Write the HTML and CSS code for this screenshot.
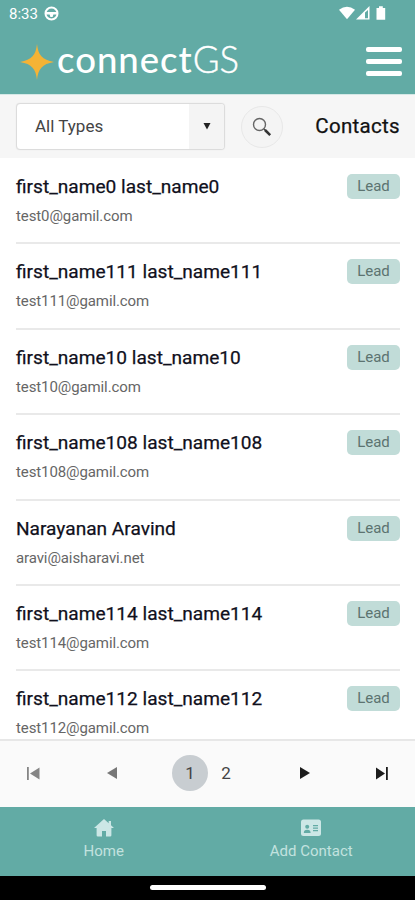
FILE: index.html
```html
<!DOCTYPE html>
<html lang="en">
<head>
<meta charset="utf-8">
<title>connectGS Contacts</title>
<link rel="stylesheet" href="styles.css">
</head>
<body>
<div class="app">
  <div class="status">
    <span class="clock">8:33</span>
    <svg class="status-app" width="15" height="15" viewBox="0 0 15 15"><circle cx="7.5" cy="7.5" r="6" fill="none" stroke="#fff" stroke-width="2"/><path d="M2 6h11v2.5H9.4l-.8 2.5H6.4l-.8-2.5H2z" fill="#fff"/></svg>
    <svg class="signals" width="48" height="15" viewBox="0 0 48 15"><path d="M0 3.7Q8 -2.2 16 3.7L8 13.3z" fill="#fff"/><path d="M17 13.5 30.5 0v13.5z" fill="#fff"/><path d="M26 6.5v5.7h3V4z" fill="#62aba5"/><path d="M37.5 2h2.5V.3h3.8V2h2.4v11.7h-8.7z" fill="#fff"/></svg>
  </div>
  <header class="header">
    <div class="brand">
      <svg width="34" height="36" viewBox="0 0 34 36"><path d="M17 0C18.2 11 22 15.9 34 18 22 20 18.2 25 17 36 15.8 25 12 20 0 18 12 15.9 15.8 11 17 0z" fill="#f5b335"/></svg>
      <span class="logo">connect</span><span class="logo logo-thin">GS</span>
    </div>
    <div class="menu"><i></i><i></i><i></i></div>
  </header>
  <div class="toolbar">
    <div class="select"><span>All Types</span><b><svg width="8" height="7" viewBox="0 0 8 7"><path d="M.5 0h7L4 6.5z" fill="#222"/></svg></b></div>
    <div class="search"><svg width="20" height="20" viewBox="0 0 20 20" fill="none"><circle cx="7.5" cy="7.5" r="6" stroke="#666" stroke-width="1.4"/><path d="m12 12 1.8 1.8" stroke="#444" stroke-width="1.4"/><path d="m13 13 5.2 5.2" stroke="#333" stroke-width="2.5"/></svg></div>
    <h1>Contacts</h1>
  </div>
  <main class="list">
    <article class="row"><div><h2>first_name0 last_name0</h2><p>test0@gamil.com</p></div><span class="tag">Lead</span></article>
    <article class="row"><div><h2>first_name111 last_name111</h2><p>test111@gamil.com</p></div><span class="tag">Lead</span></article>
    <article class="row"><div><h2>first_name10 last_name10</h2><p>test10@gamil.com</p></div><span class="tag">Lead</span></article>
    <article class="row"><div><h2>first_name108 last_name108</h2><p>test108@gamil.com</p></div><span class="tag">Lead</span></article>
    <article class="row"><div><h2>Narayanan Aravind</h2><p>aravi@aisharavi.net</p></div><span class="tag">Lead</span></article>
    <article class="row"><div><h2>first_name114 last_name114</h2><p>test114@gamil.com</p></div><span class="tag">Lead</span></article>
    <article class="row"><div><h2>first_name112 last_name112</h2><p>test112@gamil.com</p></div><span class="tag">Lead</span></article>
  </main>
  <nav class="pager">
    <svg width="13" height="13" viewBox="0 0 13 13" fill="#858585"><path d="M0 0h1.8v13H0zM12.5.5v12L3 6.5z"/></svg>
    <svg width="10" height="12" viewBox="0 0 10 12" fill="#777"><path d="M10 0v12L0 6z"/></svg>
    <div class="pages"><span class="current">1</span><span>2</span></div>
    <svg width="10" height="12" viewBox="0 0 10 12" fill="#1c1c1c"><path d="M0 0v12l10-6z"/></svg>
    <svg width="12" height="13" viewBox="0 0 12 13" fill="#1c1c1c"><path d="M0 .5v12l9-6zM10 0h1.8v13H10z"/></svg>
  </nav>
  <footer class="tabs">
    <div class="tab"><svg width="20" height="18" viewBox="0 0 20 18"><path d="M10 0 0 9h2.6v7.2q0 1.3 1.3 1.3H8V12h4v5.5h4.1q1.3 0 1.3-1.3V9H20l-3-2.8V2h-2.3v2.2z" fill="#cce7e6"/></svg><span>Home</span></div>
    <div class="tab"><svg width="20" height="18" viewBox="0 0 20 18"><rect y=".5" width="20" height="16.5" rx="2.5" fill="#cce7e6"/><g fill="#62aba5"><circle cx="6.2" cy="7.7" r="2"/><path d="M2.8 14q0-3.2 3.4-3.2T9.6 14zM12 6h5v1.2h-5zM12 8.5h5v1.2h-5zM12 11h5v1.2h-5z"/></g></svg><span>Add Contact</span></div>
  </footer>
  <div class="gesture"><i></i></div>
</div>
</body>
</html>
```
FILE: styles.css
```css
* { box-sizing: border-box; }
body { margin: 0; font-family: Roboto, sans-serif; background: #fff; }
h1, h2, p { margin: 0; font-weight: 400; white-space: nowrap; }
svg { display: block; flex: none; }
.app { width: 415px; height: 900px; display: flex; flex-direction: column; overflow: hidden; }
.status { height: 28px; background: #62aba5; display: flex; align-items: center; padding: 0 28px 1px 9px; color: #fff; flex: none; }
.clock { font-size: 15px; width: 35px; }
.signals { margin-left: auto; }
.header { height: 66px; flex: none; background: #62aba5; display: flex; align-items: center; justify-content: space-between; padding: 0 13px 0 20px; }
.brand { display: flex; align-items: center; }
.brand svg { margin-top: 1px; }
.logo { font: 500 36.5px/44px Lato, sans-serif; color: #fff; margin: -4px 0 0 3px; letter-spacing: 1px; }
.logo-thin { font-weight: 300; margin-left: 0; letter-spacing: 0; -webkit-text-stroke: .4px #fff; }
.menu { width: 36px; display: grid; gap: 7px; margin-top: 1px; }
.menu i { height: 5px; border-radius: 2px; background: #fff; }
.toolbar { height: 64px; flex: none; background: #f6f6f6; border-top: 1px solid #d5e8e6; display: flex; align-items: center; padding: 0 15px 0 16px; }
.select { width: 209px; height: 47px; border: 1px solid #dcdcdc; border-radius: 4px; display: flex; background: #fff; overflow: hidden; box-shadow: 0 0 1px #ddd; }
.select span { flex: 1; padding-left: 18px; font-size: 17px; line-height: 45px; color: #444; }
.select b { width: 35px; display: grid; place-items: center; background: #f4f4f4; }
.search { width: 42px; height: 42px; margin-left: 16px; border: 1px solid #e8e8e8; border-radius: 50%; background: #f4f4f4; display: grid; place-items: center; }
.toolbar h1 { margin: -2px 0 0 auto; font-size: 20.5px; color: #111; letter-spacing: .3px; -webkit-text-stroke: .25px #111; }
.list { height: 581px; flex: none; overflow: hidden; padding: 1px 15px 0 16px; }
.row { height: 85.4px; display: flex; justify-content: space-between; padding-top: 15px; border-bottom: 2px solid #e9e9e9; }
.row h2 { font-size: 19.1px; line-height: 26px; color: #10101c; -webkit-text-stroke: .25px #10101c; }
.row p { font-size: 15px; line-height: 20px; margin-top: 6px; color: #666; letter-spacing: -.1px; }
.tag { width: 53px; height: 25px; border-radius: 5px; background: #c1dcd8; color: #5c7370; font-size: 15px; line-height: 25px; text-align: center; }
.pager { height: 68px; flex: none; border-top: 2px solid #e7e7e7; background: #fafafa; display: grid; grid-template-columns: 80px 65px 128px 76px 12px; align-items: center; padding: 0 25px 2px 27px; }
.pages { display: flex; align-items: center; font-size: 17px; color: #444; }
.pages span { width: 36px; line-height: 36px; text-align: center; }
.pages .current { background: #c8cdd1; border-radius: 50%; }
.tabs { height: 69px; flex: none; background: #62aba5; display: grid; grid-template-columns: 1fr 1fr; color: #c2e2df; }
.tab { display: flex; flex-direction: column; align-items: center; padding-top: 12px; font-size: 15px; line-height: 20px; gap: 4px; }
.gesture { flex: 1; background: #000; padding-top: 9px; }
.gesture i { display: block; width: 116px; height: 5px; border-radius: 3px; background: #fff; margin: 0 auto; }
```
